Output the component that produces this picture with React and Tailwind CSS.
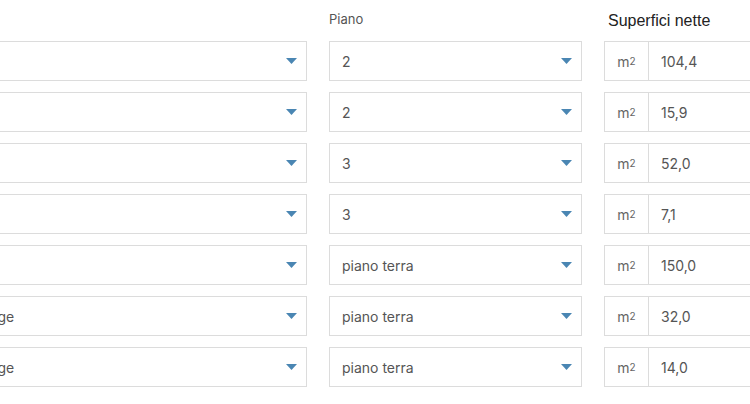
import React from 'react';

const ROWS = [
  { name: '', piano: '2', area: '104,4' },
  { name: '', piano: '2', area: '15,9' },
  { name: '', piano: '3', area: '52,0' },
  { name: '', piano: '3', area: '7,1' },
  { name: '', piano: 'piano terra', area: '150,0' },
  { name: 'Garage', piano: 'piano terra', area: '32,0' },
  { name: 'Garage', piano: 'piano terra', area: '14,0' },
];

const Caret = () => (
  <svg width="11" height="6" viewBox="0 0 11 6" className="shrink-0">
    <path d="M0 0 H11 L5.5 6 Z" fill="#4a86b3" />
  </svg>
);

const SelectBox = ({ value, className }) => (
  <div className={`h-[40px] border border-[#dcdcdc] bg-white flex items-center pl-[12px] pr-[9px] ${className || ''}`}>
    <span className="flex-1 whitespace-nowrap text-[14px] text-[#555]">{value}</span>
    <Caret />
  </div>
);

const AreaInput = ({ value }) => (
  <div className="h-[40px] w-[200px] flex border border-[#dcdcdc] bg-white">
    <div className="w-[44px] shrink-0 border-r border-[#dcdcdc] flex items-center justify-center text-[14px] text-[#666]">
      <span>m<sup className="text-[10px] relative top-[-2px]">2</sup></span>
    </div>
    <div className="flex-1 flex items-center pl-[12px] text-[14px] text-[#555]">{value}</div>
  </div>
);

export default function App() {
  return (
    <div className="w-[750px] h-[404px] overflow-hidden bg-white" style={{ fontFamily: 'Inter, "Noto Sans", sans-serif' }}>
      <div className="ml-[-47px] flex">
        <div className="w-[354px] shrink-0 mr-[22px]">
          <div className="h-[41px]" />
          <div className="flex flex-col gap-[11px]">
            {ROWS.map((r, i) => (
              <SelectBox key={i} value={r.name} />
            ))}
          </div>
        </div>

        <div className="w-[253px] shrink-0 mr-[22px]">
          <div className="h-[41px] pt-[11px] text-[13px] leading-[16px] text-[#555]">Piano</div>
          <div className="flex flex-col gap-[11px]">
            {ROWS.map((r, i) => (
              <SelectBox key={i} value={r.piano} />
            ))}
          </div>
        </div>

        <div className="w-[200px] shrink-0">
          <div
            className="h-[41px] pt-[12px] pl-[4px] text-[16px] leading-[18px] text-[#222]"
            style={{ fontFamily: '"Liberation Sans", Arial, sans-serif' }}
          >
            Superfici nette
          </div>
          <div className="flex flex-col gap-[11px]">
            {ROWS.map((r, i) => (
              <AreaInput key={i} value={r.area} />
            ))}
          </div>
        </div>
      </div>
    </div>
  );
}
